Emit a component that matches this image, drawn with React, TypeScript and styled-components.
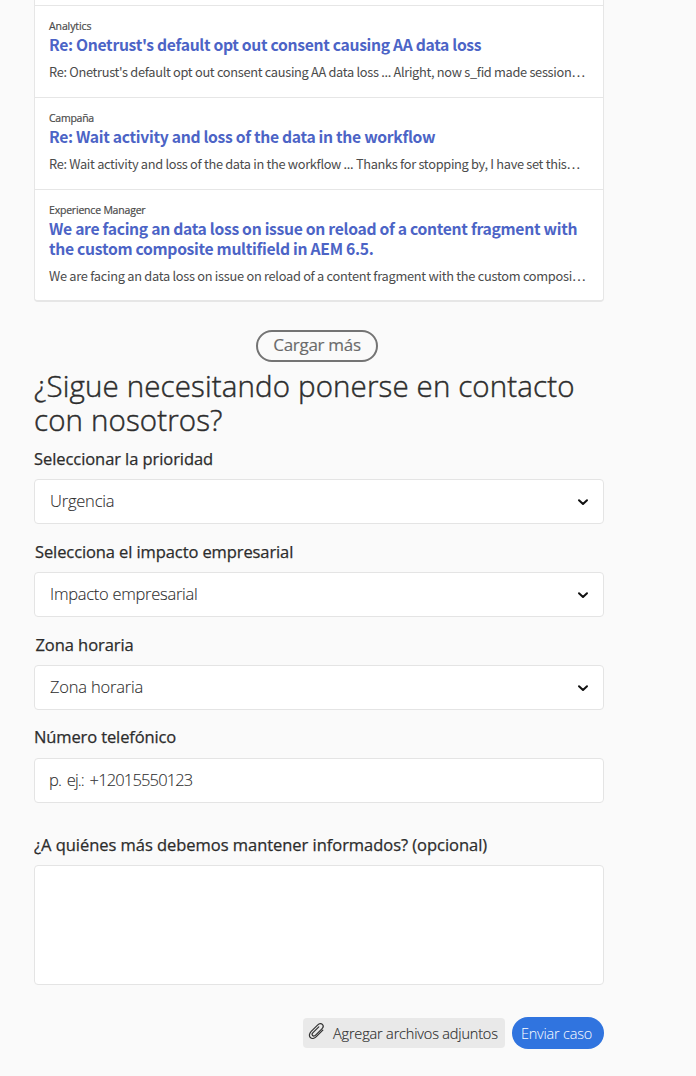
import React from "react";
import styled, { createGlobalStyle } from "styled-components";

const Global = createGlobalStyle`
  * { box-sizing: border-box; }
  body { margin: 0; background: #fafafa; color: #2c2c2c; font-family: "Open Sans", "Noto Sans", sans-serif; }
`;

const Page = styled.main`
  width: 570px;
  height: 1076px;
  margin-left: 34px;
  display: flex;
  flex-direction: column;
  overflow: hidden;
`;

const Results = styled.section`
  background: #fff;
  border: 1px solid #e6e6e6;
  border-top: 0;
  border-bottom-width: 2px;
  border-radius: 0 0 4px 4px;
  padding-top: 5px;
  height: 302px;
  flex: none;
  font-family: "Noto Sans CJK SC", "Noto Sans", sans-serif;
`;

const Result = styled.article`
  border-top: 1px solid #e6e6e6;
  padding: 14px 14px 16px;
`;

const Category = styled.div<{ $track: number }>`
  font: 400 10.5px/12px "Open Sans", sans-serif;
  letter-spacing: ${(p) => p.$track}px;
  color: #4b4b4b;
  -webkit-text-stroke: 0.2px #4b4b4b;
`;

const Title = styled.h3<{ $track: number }>`
  margin: 3px 0 7px;
  font-size: 15.7px;
  line-height: 20px;
  font-weight: 700;
  letter-spacing: ${(p) => p.$track}px;
  color: #4c64c6;
  white-space: pre;
`;

const Excerpt = styled.p<{ $track: number }>`
  margin: 0;
  font-size: 12.8px;
  line-height: 19px;
  letter-spacing: ${(p) => p.$track}px;
  color: #4b4b4b;
  white-space: nowrap;
`;

const LoadMore = styled.button`
  align-self: center;
  flex: none;
  width: 122px;
  height: 32px;
  margin: 28px 4px 8px 0;
  padding: 0 0 2px;
  border: 2px solid #747474;
  border-radius: 16px;
  background: transparent;
  color: #6a6a6a;
  font: 400 17px/24px "Open Sans", sans-serif;
  letter-spacing: -0.3px;
  -webkit-text-stroke: 0.15px #6a6a6a;
  white-space: nowrap;
`;

const Heading = styled.h2`
  margin: -1px 0 2px;
  font-size: 29.5px;
  line-height: 34px;
  font-weight: 300;
  letter-spacing: 0.13px;
  color: #2c2c2c;
  -webkit-text-stroke: 0.45px #2c2c2c;
  white-space: pre;
`;

const Field = styled.div<{ $gap: number }>`
  margin-top: ${(p) => p.$gap}px;
  display: flex;
  flex-direction: column;
  flex: none;
`;

const Label = styled.label<{ $track: number; $indent?: number; $drop?: number }>`
  height: ${(p) => 40 + (p.$drop ?? 0)}px;
  line-height: 40px;
  font-size: 16.5px;
  padding-left: ${(p) => p.$indent ?? 0}px;
  letter-spacing: ${(p) => p.$track}px;
  -webkit-text-stroke: 0.25px #2c2c2c;
  white-space: nowrap;
`;

const Control = styled.div<{ $track: number; $indent?: number; $word?: number }>`
  height: 45px;
  display: flex;
  align-items: center;
  justify-content: space-between;
  padding: 0 14px 0 ${(p) => p.$indent ?? 15}px;
  border: 1px solid #e4e4e4;
  border-radius: 4px;
  background: #fff;
  color: #2c2c2c;
  font-size: 16.5px;
  font-weight: 300;
  letter-spacing: ${(p) => p.$track}px;
  word-spacing: ${(p) => p.$word ?? 0}px;
`;

const Value = styled.span`
  padding-bottom: 2px;
  -webkit-text-stroke: 0.1px #2c2c2c;
`;

const TextArea = styled.textarea`
  height: 120px;
  border: 1px solid #e4e4e4;
  border-radius: 4px;
  background: #fff;
  resize: none;
`;

const Actions = styled.div`
  display: flex;
  justify-content: flex-end;
  align-items: center;
  gap: 7px;
  margin-top: 32px;
  flex: none;
`;

const Attach = styled.button`
  width: 202px;
  height: 30px;
  display: flex;
  align-items: center;
  gap: 8px;
  padding: 1px 0 0 5px;
  border: 0;
  border-radius: 4px;
  background: #e9e9e9;
  color: #2c2c2c;
  font: 300 14.5px/20px "Open Sans", sans-serif;
  letter-spacing: -0.17px;
  -webkit-text-stroke: 0.15px #2c2c2c;
  white-space: nowrap;
  svg { margin-bottom: 5px; flex: none; }
`;

const Submit = styled.button`
  width: 92px;
  height: 32px;
  padding: 1px 3px 0 0;
  border: 0;
  border-radius: 16px;
  background: #3074df;
  color: #fff;
  font: 300 14.5px/20px "Open Sans", sans-serif;
  letter-spacing: -0.2px;
  white-space: nowrap;
`;

const Chevron = () => (
  <svg width="12" height="8" viewBox="0 0 12 8" fill="none" stroke="#111" strokeWidth="2" strokeLinecap="round" strokeLinejoin="round">
    <path d="M2 2.2 6 6l4-3.8" />
  </svg>
);

const Clip = () => (
  <svg width="17" height="18" viewBox="0 0 17 18" fill="none" stroke="#323232" strokeWidth="1.2" strokeLinecap="round" strokeLinejoin="round">
    <path d="M14.8 8.2 8.3 14.7C6.4 16.6 3.8 16.9 2.3 15.5S1.3 11.3 3.2 9.4L9.8 2.8C11.2 1.4 13.2 1.2 14.4 2.4S15.3 5.5 13.9 6.9L7.6 13.2C6.6 14.2 5.4 14.3 4.6 13.5S4 11.6 5 10.6L10.8 4.8" />
  </svg>
);

const results = [
  { category: "Analytics", ct: -0.1, title: "Re: Onetrust's default opt out consent causing AA data loss", tt: -0.32, text: "Re: Onetrust's default opt out consent causing AA data loss ... Alright, now s_fid made session…", xt: -0.31 },
  { category: "Campaña", ct: -0.25, title: "Re: Wait activity and loss of the data in the workflow", tt: -0.31, text: "Re: Wait activity and loss of the data in the workflow ... Thanks for stopping by, I have set this…", xt: -0.31 },
  { category: "Experience Manager", ct: -0.2, title: "We are facing an data loss on issue on reload of a content fragment with\nthe custom composite multifield in AEM 6.5.", tt: -0.3, text: "We are facing an data loss on issue on reload of a content fragment with the custom composi…", xt: -0.28 },
];

const selects = [
  { label: "Seleccionar la prioridad", value: "Urgencia", gap: 0, lt: -0.07, vt: -0.2, indent: 0 },
  { label: "Selecciona el impacto empresarial", value: "Impacto empresarial", gap: 8, lt: -0.1, vt: -0.27, indent: 1 },
  { label: "Zona horaria", value: "Zona horaria", gap: 8, lt: -0.07, vt: -0.2, indent: 1.5 },
];

export default function App() {
  return (
    <>
      <Global />
      <Page>
        <Results>
          {results.map((r) => (
            <Result key={r.category}>
              <Category $track={r.ct}>{r.category}</Category>
              <Title $track={r.tt}>{r.title}</Title>
              <Excerpt $track={r.xt}>{r.text}</Excerpt>
            </Result>
          ))}
        </Results>
        <LoadMore>Cargar más</LoadMore>
        <Heading>{"¿Sigue necesitando ponerse en contacto\ncon nosotros?"}</Heading>
        {selects.map((s) => (
          <Field key={s.label} $gap={s.gap}>
            <Label $track={s.lt} $indent={s.indent}>{s.label}</Label>
            <Control $track={s.vt}><Value>{s.value}</Value><Chevron /></Control>
          </Field>
        ))}
        <Field $gap={7}>
          <Label $track={-0.12} $drop={1}>Número telefónico</Label>
          <Control $track={-0.85} $indent={14} $word={2.2}><Value>p. ej.: +12015550123</Value></Control>
        </Field>
        <Field $gap={22}>
          <Label $track={-0.04} htmlFor="watchers">¿A quiénes más debemos mantener informados? (opcional)</Label>
          <TextArea id="watchers" />
        </Field>
        <Actions>
          <Attach><Clip />Agregar archivos adjuntos</Attach>
          <Submit>Enviar caso</Submit>
        </Actions>
      </Page>
    </>
  );
}
